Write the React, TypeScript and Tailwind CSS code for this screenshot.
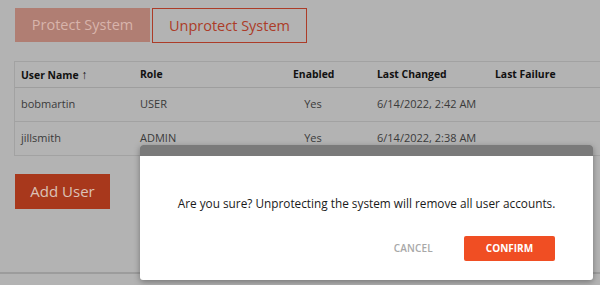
import React from "react";

export default function App() {
  const font = { fontFamily: '"Open Sans", "Noto Sans", sans-serif' };
  return (
    <div className="relative w-[600px] h-[285px] overflow-hidden bg-[#b3b3b3]" style={font}>
      <div className="flex flex-col h-full">
        <div className="flex gap-[2px] pl-[15px] pt-[8px]">
          <button className="w-[135px] h-[34px] bg-[#b07e73] text-[#d8b4ab] text-[14.5px]">Protect System</button>
          <button className="w-[155px] h-[35px] border border-[#ac3c28] text-[#ac3c28] text-[14.5px]">Unprotect System</button>
        </div>
        <div className="ml-[14px] mt-[18px] w-[600px] border-l border-t border-[#a2a2a2]">
          <div className="grid grid-cols-[119px_153px_40px_44px_118px_1fr] pl-[6px] h-[26px] items-center border-b border-[#9e9e9e] text-[10.4px] font-bold text-[#111]">
            <div>User Name <span className="text-[12px] font-normal">↑</span></div>
            <div>Role</div>
            <div>Enabled</div>
            <div></div>
            <div>Last Changed</div>
            <div>Last Failure</div>
          </div>
          {[
            ["bobmartin", "USER", "6/14/2022, 2:42 AM"],
            ["jillsmith", "ADMIN", "6/14/2022, 2:38 AM"],
          ].map((r) => (
            <div key={r[0]} className="grid grid-cols-[119px_153px_40px_44px_118px_1fr] pl-[6px] h-[34px] items-center border-b border-[#a2a2a2] text-[11px] text-[#3a3a3a]">
              <div>{r[0]}</div>
              <div>{r[1]}</div>
              <div className="text-center">Yes</div>
              <div></div>
              <div>{r[2]}</div>
              <div></div>
            </div>
          ))}
        </div>
        <div className="pl-[15px] mt-[18px]">
          <button className="w-[95px] h-[35px] bg-[#a8381c] text-[#dcc2b7] text-[15px]">Add User</button>
        </div>
        <div className="mt-[63px] h-[2px] bg-[#9c9c9c]" />
      </div>

      <div className="absolute left-[140px] top-[145px] w-[453px] h-[135px] rounded-[3px] overflow-hidden bg-white shadow-[0_2px_6px_rgba(0,0,0,0.35)] flex flex-col">
        <div className="h-[11px] bg-[#7a7a7a]" />
        <div className="flex-1 flex flex-col">
          <p className="pt-[38px] text-center text-[11.8px] leading-[18px] text-[#1a1a1a]">
            Are you sure? Unprotecting the system will remove all user accounts.
          </p>
          <div className="mt-[24px] flex justify-end items-center pr-[38px] gap-[31px]">
            <button className="text-[10px] font-semibold text-[#a8a8a8] tracking-[0.2px]">CANCEL</button>
            <button className="w-[91px] h-[25px] rounded-[2px] bg-[#f04e23] text-white text-[10px] font-bold">CONFIRM</button>
          </div>
        </div>
      </div>
    </div>
  );
}
